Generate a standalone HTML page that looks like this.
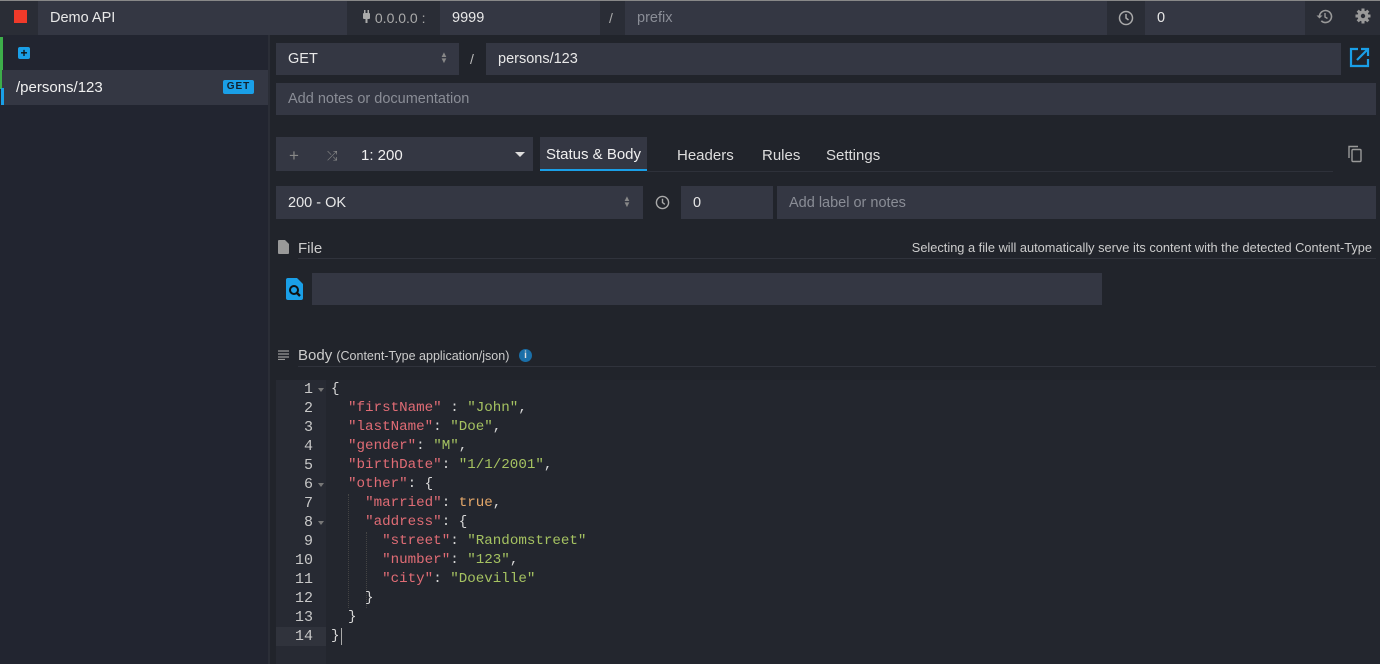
<!DOCTYPE html>
<html><head><meta charset="utf-8"><style>
*{box-sizing:border-box;margin:0;padding:0}
body{width:1380px;height:664px;overflow:hidden;background:#21242b;font-family:"Liberation Sans",sans-serif;color:#e6e6e6;position:relative;font-size:14px}
.a{position:absolute}
.in{position:absolute;background:#343743;color:#e8e8e8;font-size:14.5px;display:flex;align-items:center;padding-left:12px}
.ph{color:#8a8d96}
.dk{position:absolute;background:#2a2d36}
.code{position:absolute;left:331px;top:380px;font-family:"Liberation Mono",monospace;font-size:14.2px;line-height:19px;white-space:pre;color:#d6d6d6}
.gut{position:absolute;left:276px;top:380px;width:50px;height:284px;background:#272a33;font-family:"Liberation Mono",monospace;font-size:15px;line-height:19px;color:#c8c8c8;text-align:right}
.gut div{padding-right:13px;position:relative}
.k{color:#e06c75}.s{color:#a5c261}.b{color:#e5a86a}
.f:after{content:"";position:absolute;right:2px;top:8px;border:3px solid transparent;border-top:4px solid #777}
</style></head><body>
<div class="a" style="left:0;top:0;width:1380px;height:1px;background:#888"></div>
<div class="dk" style="left:0;top:1px;width:1380px;height:34px"></div>
<div class="a" style="left:14px;top:10px;width:13px;height:13px;background:#f03a2a"></div>
<div class="in" style="left:38px;top:1px;width:309px;height:34px">Demo API</div>
<div class="a" style="left:362px;top:10px;font-size:14px;color:#aaa"><svg width="9" height="14" viewBox="0 0 9 14" style="vertical-align:-1px"><rect x="1" y="3" width="7" height="6" rx="1" fill="#aaa"/><rect x="2" y="0" width="1.5" height="4" fill="#aaa"/><rect x="5.5" y="0" width="1.5" height="4" fill="#aaa"/><rect x="3.5" y="9" width="2" height="4" fill="#aaa"/></svg> 0.0.0.0 :</div>
<div class="in" style="left:440px;top:1px;width:160px;height:34px">9999</div>
<div class="a" style="left:609px;top:10px;color:#aaa">/</div>
<div class="in ph" style="left:625px;top:1px;width:482px;height:34px">prefix</div>
<svg class="a" style="left:1118px;top:10px" width="16" height="16" viewBox="0 0 16 16"><circle cx="8" cy="8" r="6.5" fill="none" stroke="#aaa" stroke-width="1.5"/><path d="M8 4v4l2.5 2" fill="none" stroke="#aaa" stroke-width="1.5"/></svg>
<div class="in" style="left:1145px;top:1px;width:160px;height:34px">0</div>
<svg class="a" style="left:1316px;top:8px" width="17" height="17" viewBox="0 0 17 17"><path d="M3.5 8.5a6 6 0 1 1 1.8 4.3" fill="none" stroke="#999" stroke-width="1.6"/><path d="M0.5 7.5h6l-3 3z" fill="#999"/><path d="M9 5v4l2.5 1.5" fill="none" stroke="#999" stroke-width="1.4"/></svg>
<svg class="a" style="left:1355px;top:8px" width="16" height="16" viewBox="0 0 16 16"><circle cx="8" cy="8" r="5.5" fill="#999"/><g stroke="#999" stroke-width="3"><path d="M8 0.5v15M0.5 8h15M2.7 2.7l10.6 10.6M13.3 2.7L2.7 13.3"/></g><circle cx="8" cy="8" r="2.2" fill="#2a2d36"/></svg>

<div class="a" style="left:0;top:35px;width:268px;height:629px;background:#222530"></div>
<div class="a" style="left:268px;top:35px;width:2px;height:629px;background:#2b2e37"></div>
<div class="a" style="left:0;top:37px;width:3px;height:52px;background:#3dae4a"></div>
<div class="a" style="left:18px;top:47px;width:12px;height:12px;background:#1a9fe7;border-radius:2px;color:#111;font-size:12px;line-height:12px;text-align:center;font-weight:bold">+</div>
<div class="a" style="left:2px;top:70px;width:266px;height:35px;background:#343743"></div>
<div class="a" style="left:1px;top:88px;width:3px;height:17px;background:#1a9fe7"></div>
<div class="a" style="left:16px;top:79px;font-size:15px;color:#f0f0f0">/persons/123</div>
<div class="a" style="left:223px;top:80px;width:31px;height:14px;background:#1a9fe7;border-radius:2px;color:#12202c;font-size:10px;font-weight:bold;text-align:center;line-height:14px;letter-spacing:1px">GET</div>

<div class="in" style="left:276px;top:43px;width:183px;height:32px">GET</div>
<div class="a" style="left:440px;top:52px;font-size:8px;color:#888;line-height:6px">▲<br>▼</div>
<div class="a" style="left:470px;top:51px;color:#bbb">/</div>
<div class="in" style="left:486px;top:43px;width:855px;height:32px">persons/123</div>
<svg class="a" style="left:1349px;top:47px" width="21" height="21" viewBox="0 0 21 21"><path d="M9 2H2v17h17v-7" fill="none" stroke="#1a9fe7" stroke-width="2.2"/><path d="M8 13L19 2M12 2h7v7" fill="none" stroke="#1a9fe7" stroke-width="2.2"/></svg>
<div class="in ph" style="left:276px;top:83px;width:1100px;height:32px">Add notes or documentation</div>

<div class="in" style="left:276px;top:137px;width:257px;height:34px;padding:0"></div>
<div class="a" style="left:289px;top:146px;color:#888;font-size:17px">+</div>
<div class="a" style="left:327px;top:148px;color:#888;font-size:13px">⤮</div>
<div class="a" style="left:361px;top:147px;font-size:15px;color:#f0f0f0">1: 200</div>
<div class="a" style="left:515px;top:152px;border:5px solid transparent;border-top:5px solid #ddd"></div>
<div class="a" style="left:540px;top:137px;width:107px;height:32px;background:#343743;color:#f0f0f0;font-size:15px;text-align:center;line-height:36px">Status &amp; Body</div>
<div class="a" style="left:540px;top:169px;width:107px;height:2px;background:#1a9fe7"></div>
<div class="a" style="left:647px;top:171px;width:686px;height:1px;background:#2e313a"></div>
<div class="a" style="left:677px;top:147px;font-size:15px;color:#ddd">Headers</div>
<div class="a" style="left:762px;top:147px;font-size:15px;color:#ddd">Rules</div>
<div class="a" style="left:826px;top:147px;font-size:15px;color:#ddd">Settings</div>
<svg class="a" style="left:1347px;top:145px" width="18" height="18" viewBox="0 0 18 18"><path d="M2 13V1.5h9" fill="none" stroke="#999" stroke-width="1.4"/><rect x="5" y="4.5" width="9" height="12" rx="1" fill="none" stroke="#999" stroke-width="1.4"/></svg>

<div class="in" style="left:276px;top:186px;width:367px;height:33px">200 - OK</div>
<div class="a" style="left:623px;top:196px;font-size:8px;color:#888;line-height:6px">▲<br>▼</div>
<svg class="a" style="left:655px;top:195px" width="15" height="15" viewBox="0 0 16 16"><circle cx="8" cy="8" r="6.5" fill="none" stroke="#aaa" stroke-width="1.5"/><path d="M8 4v4l2.5 2" fill="none" stroke="#aaa" stroke-width="1.5"/></svg>
<div class="in" style="left:681px;top:186px;width:92px;height:33px">0</div>
<div class="in ph" style="left:777px;top:186px;width:599px;height:33px">Add label or notes</div>

<svg class="a" style="left:278px;top:240px" width="11" height="14" viewBox="0 0 11 14"><path d="M0 1a1 1 0 0 1 1-1h6l4 4v9a1 1 0 0 1-1 1H1a1 1 0 0 1-1-1z" fill="#999"/></svg>
<div class="a" style="left:298px;top:240px;font-size:15px;color:#ccc">File</div>
<div class="a" style="right:8px;top:240px;font-size:12.8px;color:#ccc">Selecting a file will automatically serve its content with the detected Content-Type</div>
<div class="a" style="left:298px;top:258px;width:1078px;height:1px;background:#30333c"></div>
<svg class="a" style="left:286px;top:278px" width="17" height="22" viewBox="0 0 17 22"><path d="M0 2a2 2 0 0 1 2-2h9l6 6v14a2 2 0 0 1-2 2H2a2 2 0 0 1-2-2z" fill="#1a9fe7"/><circle cx="8" cy="12" r="4" fill="none" stroke="#111" stroke-width="2"/><path d="M11 15l3 3" stroke="#111" stroke-width="2.4"/></svg>
<div class="in" style="left:312px;top:273px;width:790px;height:32px"></div>

<svg class="a" style="left:278px;top:350px" width="11" height="10" viewBox="0 0 11 10"><path d="M0 1h11M0 4h11M0 7h11M0 9.5h7" stroke="#999" stroke-width="1.2"/></svg>
<div class="a" style="left:298px;top:347px;font-size:15px;color:#ccc">Body <span style="font-size:12.5px">(Content-Type application/json)</span></div>
<div class="a" style="left:519px;top:349px;width:13px;height:13px;border-radius:50%;background:#1a6fa8;color:#ddd;font-size:10px;text-align:center;line-height:13px;font-weight:bold">i</div>
<div class="a" style="left:298px;top:366px;width:1078px;height:1px;background:#30333c"></div>

<div class="a" style="left:326px;top:380px;width:1054px;height:284px;background:#23262e"></div>
<div class="gut">
<div class="f">1</div><div>2</div><div>3</div><div>4</div><div>5</div><div class="f">6</div><div>7</div><div class="f">8</div><div>9</div><div>10</div><div>11</div><div>12</div><div>13</div><div style="background:#30333c">14</div>
</div>
<div class="a" style="left:348px;top:494px;border-left:1px dotted #444;height:114px"></div>
<div class="a" style="left:366px;top:532px;border-left:1px dotted #444;height:76px"></div>
<div class="code">{
  <span class="k">"firstName"</span> : <span class="s">"John"</span>,
  <span class="k">"lastName"</span>: <span class="s">"Doe"</span>,
  <span class="k">"gender"</span>: <span class="s">"M"</span>,
  <span class="k">"birthDate"</span>: <span class="s">"1/1/2001"</span>,
  <span class="k">"other"</span>: {
    <span class="k">"married"</span>: <span class="b">true</span>,
    <span class="k">"address"</span>: {
      <span class="k">"street"</span>: <span class="s">"Randomstreet"</span>
      <span class="k">"number"</span>: <span class="s">"123"</span>,
      <span class="k">"city"</span>: <span class="s">"Doeville"</span>
    }
  }
}</div>
<div class="a" style="left:341px;top:628px;width:1px;height:17px;background:#aaa"></div>
</body></html>
